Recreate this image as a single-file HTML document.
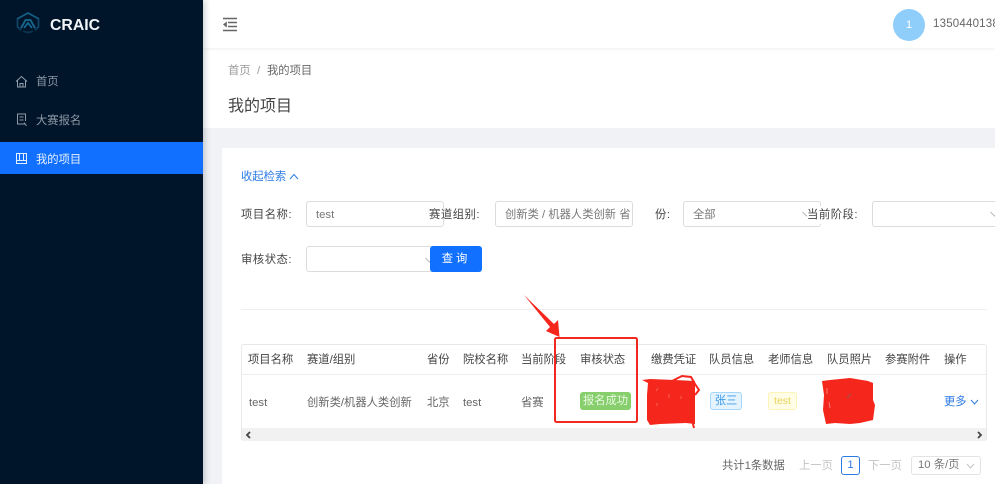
<!DOCTYPE html>
<html lang="zh"><head><meta charset="utf-8"><title>我的项目</title>
<style>
*{box-sizing:border-box}
html,body{margin:0;padding:0;width:1001px;height:484px;overflow:hidden;background:#fff}
body{font-family:"Liberation Sans","Noto Sans CJK SC",sans-serif;font-size:11.3px;color:#555;position:relative}
.a{position:absolute;white-space:nowrap;line-height:18px}
#app{position:absolute;left:0;top:0;width:995px;height:484px;overflow:hidden;background:#f0f2f5;filter:blur(.35px)}
.side{position:absolute;left:0;top:0;width:203px;height:484px;background:#00142a;box-shadow:2px 0 6px rgba(0,21,41,.2)}
.box{position:absolute;height:26px;border:1px solid #dcdcdc;border-radius:3px;background:#fff;color:#777;padding-left:9px;line-height:26px}
.lb{color:#444;letter-spacing:.55px}
.th{color:#444;top:351px}
.td{color:#666;top:394px}
.chev{position:absolute}
</style></head><body>
<div id="app">
<div class="a" style="left:203px;top:0;width:792px;height:128px;background:#fff"></div>
<div class="a" style="left:203px;top:0;width:792px;height:48px;background:#fff;box-shadow:0 1px 3px rgba(0,21,41,.07)"></div>
<div class="a" style="left:222px;top:148px;width:773px;height:336px;background:#fff"></div>

<div class="side"></div>
<svg class="a" style="left:16px;top:12px" width="24" height="22" viewBox="0 0 24 22" fill="none" stroke="#135f84" stroke-width="1.800"><path d="M1 7 12 1 23 7"/><path d="M1.500 7V15L5 18M22.500 7V15L19 18" stroke="#0e4564"/><path d="M5 16 9.500 8H14.500L19 16" stroke="#17688f"/><path d="M8 16 12 11 16 16" stroke="#17688f"/><path d="M7 19C11 21 14 21 17 19" stroke="#0b3550"/></svg>
<div class="a" style="left:50px;top:15.500px;font-size:15.800px;font-weight:bold;color:#f2f5f8;line-height:19px">CRAIC</div>
<svg class="a" style="left:15px;top:75px" width="13" height="13" viewBox="0 0 13 13" fill="none" stroke="#93a0ad" stroke-width="1"><path d="M1 6.500 6.500 1.500 12 6.500M2.500 5.500V12H10.500V5.500M5 12V8.500H8V12"/></svg>
<div class="a" style="left:36px;top:73px;color:#8e9aa6">首页</div>
<svg class="a" style="left:16px;top:113px" width="12" height="14" viewBox="0 0 12 14" fill="none" stroke="#8e9aa6" stroke-width="1"><path d="M9.500 11H1.500V1H9.500V8M3.500 4H7.500M3.500 7H7.500M8 9.500 10.500 13"/></svg>
<div class="a" style="left:36px;top:112px;color:#8e9aa6">大赛报名</div>
<div class="a" style="left:0;top:142px;width:203px;height:32px;background:#1170ff"></div>
<svg class="a" style="left:16px;top:153px" width="11" height="11" viewBox="0 0 11 11" fill="none" stroke="#e3eeff" stroke-width="1"><path d="M.5.500H10.500V10.500H.5ZM3.500 1V7M7.500 1V7M.5 7.500H10.500"/></svg>
<div class="a" style="left:36px;top:151px;color:#e8f1ff">我的项目</div>

<svg class="a" style="left:222px;top:17px" width="16" height="15" viewBox="0 0 16 15" fill="none" stroke="#666" stroke-width="1.500"><path d="M1 1.500H15M6 5.500H15M6 9.500H15M1 13.500H15"/><path d="M4.500 5V10L1.500 7.500Z" fill="#666" stroke-width=".6"/></svg>
<div class="a" style="left:893px;top:9px;width:32px;height:32px;border-radius:50%;background:#8fcdfb;color:#fff;text-align:center;line-height:32px">1</div>
<div class="a" style="left:933px;top:15px;color:#666;font-size:11.500px;letter-spacing:.2px">13504401388</div>

<div class="a" style="left:228px;top:61.500px;color:#999">首页</div>
<div class="a" style="left:257px;top:61.500px;color:#999">/</div>
<div class="a" style="left:267px;top:61.500px;color:#666">我的项目</div>
<div class="a" style="left:228px;top:96.500px;font-size:16px;color:#444;line-height:20px">我的项目</div>

<div class="a" style="left:241px;top:168px;color:#2c7be5">收起检索</div>
<svg class="a" style="left:289px;top:173px" width="10" height="7" viewBox="0 0 10 7" fill="none" stroke="#2c7be5" stroke-width="1"><path d="M1 6 5 1.500 9 6"/></svg>

<div class="a lb" style="left:241px;top:206px">项目名称:</div>
<div class="box" style="left:306px;top:201px;width:138px">test</div>
<div class="a lb" style="left:429px;top:206px">赛道组别:</div>
<div class="box" style="left:495px;top:201px;width:138px;overflow:hidden;padding-right:0;color:#777">创新类 / 机器人类创新 省</div>
<div class="a lb" style="left:655px;top:206px">份:</div>
<div class="box" style="left:683px;top:201px;width:138px">全部</div>
<svg class="chev" style="left:802px;top:211px" width="9" height="6" viewBox="0 0 9 6" fill="none" stroke="#bbb"><path d="M.5 1 4.500 5 8.500 1"/></svg>
<div class="a lb" style="left:807px;top:206px;background:#fff">当前阶段:</div>
<div class="box" style="left:872px;top:201px;width:140px"></div>
<svg class="chev" style="left:990px;top:211px" width="9" height="6" viewBox="0 0 9 6" fill="none" stroke="#bbb"><path d="M.5 1 4.500 5 8.500 1"/></svg>

<div class="a lb" style="left:241px;top:251px">审核状态:</div>
<div class="box" style="left:306px;top:246px;width:138px"></div>
<svg class="chev" style="left:425px;top:257px" width="9" height="6" viewBox="0 0 9 6" fill="none" stroke="#bbb"><path d="M.5 1 4.500 5 8.500 1"/></svg>
<div class="a" style="left:430px;top:246px;width:52px;height:26px;background:#1170ff;border-radius:3px;color:#fff;text-align:center;line-height:27px;letter-spacing:3px">查询</div>

<div class="a" style="left:241px;top:309px;width:746px;height:1px;background:#eee"></div>

<div class="a" style="left:241px;top:344px;width:746px;height:97px;border:1px solid #e8e8e8;border-radius:3px"></div>
<div class="a" style="left:242px;top:374px;width:744px;height:1px;background:#eee"></div>
<div class="a" style="left:242px;top:428px;width:744px;height:13px;background:#f1f1f1"></div>
<svg class="a" style="left:245px;top:431px" width="6" height="8" viewBox="0 0 6 8" fill="none" stroke="#444" stroke-width="1.800"><path d="M5 1 2 4 5 7"/></svg>
<svg class="a" style="left:977px;top:431px" width="6" height="8" viewBox="0 0 6 8" fill="none" stroke="#444" stroke-width="1.800"><path d="M1 1 4 4 1 7"/></svg>

<div class="a th" style="left:248px">项目名称</div>
<div class="a th" style="left:307px">赛道/组别</div>
<div class="a th" style="left:427px">省份</div>
<div class="a th" style="left:463px">院校名称</div>
<div class="a th" style="left:521px">当前阶段</div>
<div class="a th" style="left:580px">审核状态</div>
<div class="a th" style="left:651px">缴费凭证</div>
<div class="a th" style="left:709px">队员信息</div>
<div class="a th" style="left:768px">老师信息</div>
<div class="a th" style="left:827px">队员照片</div>
<div class="a th" style="left:885px">参赛附件</div>
<div class="a th" style="left:944px">操作</div>

<div class="a td" style="left:249px">test</div>
<div class="a td" style="left:307px">创新类/机器人类创新</div>
<div class="a td" style="left:427px">北京</div>
<div class="a td" style="left:463px">test</div>
<div class="a td" style="left:521px">省赛</div>
<div class="a" style="left:580px;top:392px;width:51px;height:18px;background:#87cf6c;border-radius:3px;color:#eaf8e3;text-align:center;line-height:18px">报名成功</div>
<div class="a" style="left:710px;top:392px;width:32px;height:18px;background:#e4f3fe;border:1px solid #a6d6f8;border-radius:3px;color:#3e9bea;text-align:center;line-height:16px">张三</div>
<div class="a" style="left:768px;top:392px;width:29px;height:18px;background:#fffde6;border:1px solid #fdf4b8;border-radius:3px;color:#e6d35a;text-align:center;line-height:16px;font-size:10.500px">test</div>
<div class="a" style="left:944px;top:393px;color:#2c7be5">更多</div>
<svg class="a" style="left:970px;top:399px" width="9" height="6" viewBox="0 0 9 6" fill="none" stroke="#2c7be5"><path d="M1 1 4.500 5 8 1"/></svg>

<div class="a" style="left:722px;top:457px;color:#666">共计1条数据</div>
<div class="a" style="left:799px;top:457px;color:#c4c4c4">上一页</div>
<div class="a" style="left:841px;top:456px;width:19px;height:19px;border:1px solid #2c7be5;border-radius:3px;color:#2c7be5;text-align:center;line-height:17px">1</div>
<div class="a" style="left:868px;top:457px;color:#c4c4c4">下一页</div>
<div class="a" style="left:911px;top:456px;width:70px;height:19px;border:1px solid #e3e3e3;border-radius:3px;color:#777;padding-left:6px;line-height:17px">10 条/页</div>
<svg class="a" style="left:966px;top:463px" width="9" height="6" viewBox="0 0 9 6" fill="none" stroke="#c4c4c4"><path d="M1 1 4.500 5 8 1"/></svg>

<svg class="a" style="left:0;top:0" width="995" height="484" viewBox="0 0 995 484">
<path d="M524 295 554 324 558 320 559.500 337 546 331 550 327Z" fill="#f5261c"/>
<rect x="555" y="338" width="82" height="84" rx="1.500" fill="none" stroke="#f0281e" stroke-width="2"/>
<path d="M642 380 650 379 675 380 695 381 695 424 686 423 660 424 650 425 647 420 647 395 648 383Z" fill="#f5261c"/>
<path d="M672 381 682 376 691 377 695 384 699 390 695 395 M692 420 694 428" fill="none" stroke="#f5261c" stroke-width="2"/>
<path d="M658 388 656 391M669 394V398M657 403V406M681 396V399" fill="none" stroke="#f87a6e" stroke-width="1" opacity=".7"/>
<path d="M822 381 830 380 850 378 868 381 873 383 873 400 875 405 873 420 860 423 850 424 835 423 826 424 823 410 824 395Z" fill="#f5261c"/>
<path d="M827 388V394M829 402 830 408" fill="none" stroke="#f8a097" stroke-width="1" opacity=".7"/>
<path d="M847 398 851 394" fill="none" stroke="#b04a44" stroke-width="2" opacity=".7"/>
</svg>
</div>
</body></html>
